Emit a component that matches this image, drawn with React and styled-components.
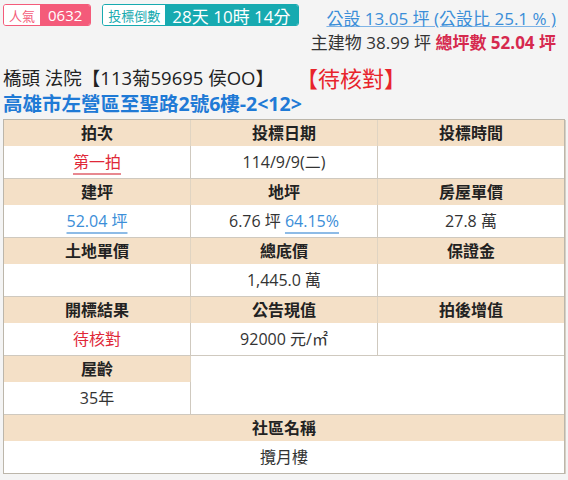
import React from 'react';
import styled, { createGlobalStyle } from 'styled-components';

// page basics: light grey background, one font stack for latin + CJK
const GlobalStyle = createGlobalStyle`
  body {
    margin: 0;
    background: #f4f4f4;
    font-family: "Open Sans", "Noto Sans CJK TC", sans-serif;
    color: #333;
  }
`;

const Page = styled.div`
  padding: 4px 3px 0 3px;
`;

const TopBar = styled.div`
  display: flex;
  justify-content: space-between;
  align-items: flex-start;
  height: 60px;
`;

const Badges = styled.div`
  display: flex;
  gap: 11px;
`;

const Badge = styled.div`
  display: flex;
  height: 22px;
  border: 1px solid ${(p) => p.$color};
  border-radius: 3px;
  overflow: hidden;
  box-sizing: border-box;
`;

const BadgeLabel = styled.span`
  display: flex;
  align-items: center;
  padding: 0 5px;
  background: #fff;
  color: ${(p) => p.$color};
  font-size: 13px;
`;

const BadgeValue = styled.span`
  display: flex;
  align-items: center;
  padding: 0 ${(p) => p.$pad || 8}px;
  background: ${(p) => p.$color};
  color: #fff;
  font-size: ${(p) => p.$size || 15}px;
`;

const AreaInfo = styled.div`
  display: flex;
  flex-direction: column;
  align-items: flex-end;
  padding: 4px 9px 0 0;
`;

const PublicArea = styled.a`
  color: #3b8ed8;
  font-size: 17px;
  line-height: 22px;
  text-decoration: underline;
  text-decoration-color: #7fb4e6;
`;

const AreaLine = styled.div`
  font-size: 17px;
  line-height: 26px;
  color: #333;
`;

const Total = styled.span`
  color: #d6294e;
  font-weight: bold;
`;

const CaseTitle = styled.div`
  margin-top: 1px;
  display: flex;
  align-items: center;
  gap: 22px;
  font-size: 18.5px;
  line-height: 26px;
  color: #222;
`;

const Status = styled.span`
  color: #e8242c;
  font-size: 22px;
`;

const Address = styled.div`
  font-size: 19.5px;
  line-height: 26px;
  font-weight: bold;
  color: #1f7ad6;
`;

const Table = styled.div`
  margin-top: 2px;
  display: grid;
  grid-template-columns: 187px 187px 1fr;
  background: #fff;
  border: 1px solid #bcb6aa;
  box-shadow: 1px 1px 0 #d6d0c4;
  width: 562px;
  box-sizing: border-box;
`;

const Head = styled.div`
  grid-column: ${(p) => p.$span || 'auto'};
  height: 26px;
  line-height: 26px;
  text-align: center;
  background: #f4e0c7;
  font-size: 16px;
  font-weight: bold;
  color: #222;
  border-right: ${(p) => (p.$last ? 'none' : '1px solid #e0d4c2')};
`;

const Cell = styled.div`
  grid-column: ${(p) => p.$span || 'auto'};
  grid-row: ${(p) => p.$rows || 'auto'};
  height: ${(p) => (p.$rows ? 'auto' : '32px')};
  line-height: 32px;
  text-align: center;
  font-size: 16px;
  color: ${(p) => p.$color || '#333'};
  border-bottom: ${(p) => (p.$noBottom ? 'none' : '1px solid #cfc9bf')};
  border-right: ${(p) => (p.$last ? 'none' : '1px solid #cfc9bf')};
`;

const Link = styled.span`
  color: ${(p) => p.$color};
  text-decoration: underline;
  text-decoration-color: ${(p) => p.$line};
  text-underline-offset: 5px;
  text-decoration-thickness: 2px;
`;

const RED = '#e02838';
const BLUE = '#3b8ed8';

export default function App() {
  return (
    <Page>
      <GlobalStyle />
      <TopBar>
        <Badges>
          <Badge $color="#f45b7a">
            <BadgeLabel $color="#f45b7a">人氣</BadgeLabel>
            <BadgeValue $color="#f45b7a">0632</BadgeValue>
          </Badge>
          <Badge $color="#17aab0">
            <BadgeLabel $color="#17aab0">投標倒數</BadgeLabel>
            <BadgeValue $color="#17aab0" $size={17} $pad={7}>28天 10時 14分</BadgeValue>
          </Badge>
        </Badges>
        <AreaInfo>
          <PublicArea>公設 13.05 坪 (公設比 25.1 % )</PublicArea>
          <AreaLine>
            主建物 38.99 坪 <Total>總坪數 52.04 坪</Total>
          </AreaLine>
        </AreaInfo>
      </TopBar>

      <CaseTitle>
        <span>橋頭 法院【113菊59695 侯OO】</span>
        <Status>【待核對】</Status>
      </CaseTitle>
      <Address>高雄市左營區至聖路2號6樓-2&lt;12&gt;</Address>

      <Table>
        <Head>拍次</Head>
        <Head>投標日期</Head>
        <Head $last>投標時間</Head>
        <Cell>
          <Link $color={RED} $line="#e88890">第一拍</Link>
        </Cell>
        <Cell>114/9/9(二)</Cell>
        <Cell $last></Cell>

        <Head>建坪</Head>
        <Head>地坪</Head>
        <Head $last>房屋單價</Head>
        <Cell>
          <Link $color={BLUE} $line="#8dbbe6">52.04 坪</Link>
        </Cell>
        <Cell>
          6.76 坪 <Link $color={BLUE} $line="#8dbbe6">64.15%</Link>
        </Cell>
        <Cell $last>27.8 萬</Cell>

        <Head>土地單價</Head>
        <Head>總底價</Head>
        <Head $last>保證金</Head>
        <Cell></Cell>
        <Cell>1,445.0 萬</Cell>
        <Cell $last></Cell>

        <Head>開標結果</Head>
        <Head>公告現值</Head>
        <Head $last>拍後增值</Head>
        <Cell $color={RED}>待核對</Cell>
        <Cell>92000 元/㎡</Cell>
        <Cell $last></Cell>

        <Head>屋齡</Head>
        <Cell $span="2 / 4" $rows="span 2" $last></Cell>
        <Cell>35年</Cell>

        <Head $span="1 / 4" $last>社區名稱</Head>
        <Cell $span="1 / 4" $last $noBottom>攬月樓</Cell>
      </Table>
    </Page>
  );
}
